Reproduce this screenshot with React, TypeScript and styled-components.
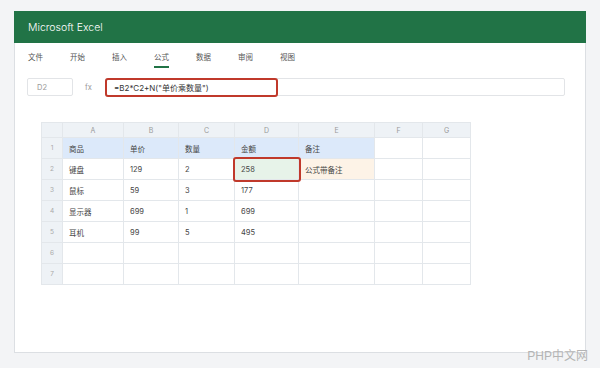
import styled, { createGlobalStyle, css } from "styled-components";

const GlobalStyle = createGlobalStyle`
  html, body {
    margin: 0;
    padding: 0;
    background: #f3f4f6;
    font-family: "Inter", "Noto Sans CJK SC", sans-serif;
  }
`;

const Page = styled.div`
  position: relative;
  width: 600px;
  height: 368px;
  padding: 11px 14px 0;
  box-sizing: border-box;
`;

const Window = styled.div`
  height: 342px;
  background: #ffffff;
  border: 1px solid #dcdfe3;
  border-top: none;
  box-sizing: border-box;
  display: flex;
  flex-direction: column;
`;

const TitleBar = styled.div`
  height: 32px;
  margin: 0 -1px;
  background: #217346;
  color: #ffffff;
  display: flex;
  align-items: center;
  padding-left: 14px;
  font-size: 10.5px;
  font-weight: 300;
`;

const Tabs = styled.div`
  display: flex;
  padding: 9px 0 0 13px;
  height: 26px;
  box-sizing: border-box;
`;

const Tab = styled.div<{ $active?: boolean }>`
  width: 42px;
  font-size: 7.5px;
  color: #555;
  position: relative;
  line-height: 12px;

  ${({ $active }) =>
    $active &&
    css`
      &::after {
        content: "";
        position: absolute;
        left: 0;
        top: 14px;
        width: 15px;
        height: 2px;
        background: #217346;
      }
    `}
`;

const FormulaRow = styled.div`
  display: flex;
  align-items: center;
  margin-top: 9px;
  padding: 0 20px 0 12px;
  height: 18px;
`;

const NameBox = styled.div`
  width: 46px;
  height: 18px;
  box-sizing: border-box;
  border: 1px solid #e2e4e7;
  border-radius: 2px;
  font-size: 7.5px;
  color: #999;
  display: flex;
  align-items: center;
  padding-left: 9px;
`;

const FxLabel = styled.div`
  width: 32px;
  padding-left: 12px;
  box-sizing: border-box;
  font-size: 7.5px;
  color: #999;
`;

const FormulaInput = styled.div`
  flex: 1;
  height: 18px;
  box-sizing: border-box;
  border: 1px solid #e2e4e7;
  border-radius: 2px;
  display: flex;
`;

const Highlight = styled.div`
  width: 173px;
  margin: -1px 0 -2px -1px;
  box-sizing: border-box;
  border: 2px solid #c0392b;
  border-radius: 3px;
  font-size: 8px;
  color: #333;
  display: flex;
  align-items: center;
  padding-left: 7px;
`;

const GridWrap = styled.div`
  margin: 26px 0 0 26px;
`;

const Grid = styled.table`
  border-collapse: collapse;
  table-layout: fixed;
  width: 429px;
  font-size: 7.5px;
  color: #444;
`;

const ColHead = styled.th`
  height: 14px;
  padding: 0;
  background: #eef2f6;
  border: 1px solid #e3e7eb;
  font-weight: normal;
  color: #999;
  font-size: 7px;
`;

const RowHead = styled.td`
  height: 20px;
  padding: 0;
  background: #eef2f6;
  border: 1px solid #e3e7eb;
  text-align: center;
  color: #aaa;
  font-size: 6.5px;
`;

type Tone = "head" | "note" | "picked" | undefined;

const toneBg: Record<string, string> = {
  head: "#dce9fa",
  note: "#fdf3e7",
  picked: "#e7f3e9",
};

const Cell = styled.td<{ $tone?: Tone }>`
  height: 20px;
  padding: 0 0 0 6px;
  border: 1px solid #e3e7eb;
  background: ${({ $tone }) => ($tone ? toneBg[$tone] : "#ffffff")};
  position: relative;
  white-space: nowrap;

  ${({ $tone }) =>
    $tone === "picked" &&
    css`
      z-index: 2;
      &::after {
        content: "";
        position: absolute;
        left: -2px;
        top: -2px;
        right: -3px;
        bottom: -3px;
        border: 2px solid #c0392b;
        border-radius: 3px;
      }
    `}
`;

const Watermark = styled.div`
  position: absolute;
  right: 12px;
  bottom: 5px;
  font-size: 12px;
  color: #b4b4b4;
  font-family: "Liberation Sans", "Noto Sans CJK SC", sans-serif;
`;

const tabs = ["文件", "开始", "插入", "公式", "数据", "审阅", "视图"];
const letters = ["A", "B", "C", "D", "E", "F", "G"];
const widths = [21, 61, 55, 56, 64, 76, 48, 48];

const rows: string[][] = [
  ["商品", "单价", "数量", "金额", "备注", "", ""],
  ["键盘", "129", "2", "258", "公式带备注", "", ""],
  ["鼠标", "59", "3", "177", "", "", ""],
  ["显示器", "699", "1", "699", "", "", ""],
  ["耳机", "99", "5", "495", "", "", ""],
  ["", "", "", "", "", "", ""],
  ["", "", "", "", "", "", ""],
];

const toneFor = (r: number, c: number): Tone => {
  if (r === 0 && c < 5) return "head";
  if (r === 1 && c === 3) return "picked";
  if (r === 1 && c === 4) return "note";
  return undefined;
};

export default function App() {
  return (
    <Page>
      <GlobalStyle />
      <Window>
        <TitleBar>Microsoft Excel</TitleBar>
        <Tabs>
          {tabs.map((t) => (
            <Tab key={t} $active={t === "公式"}>
              {t}
            </Tab>
          ))}
        </Tabs>
        <FormulaRow>
          <NameBox>D2</NameBox>
          <FxLabel>fx</FxLabel>
          <FormulaInput>
            <Highlight>=B2*C2+N("单价乘数量")</Highlight>
          </FormulaInput>
        </FormulaRow>
        <GridWrap>
          <Grid>
            <colgroup>
              {widths.map((w, i) => (
                <col key={i} style={{ width: w }} />
              ))}
            </colgroup>
            <thead>
              <tr>
                <ColHead />
                {letters.map((l) => (
                  <ColHead key={l}>{l}</ColHead>
                ))}
              </tr>
            </thead>
            <tbody>
              {rows.map((row, r) => (
                <tr key={r}>
                  <RowHead>{r + 1}</RowHead>
                  {row.map((v, c) => (
                    <Cell key={c} $tone={toneFor(r, c)}>
                      {v}
                    </Cell>
                  ))}
                </tr>
              ))}
            </tbody>
          </Grid>
        </GridWrap>
      </Window>
      <Watermark>PHP中文网</Watermark>
    </Page>
  );
}
